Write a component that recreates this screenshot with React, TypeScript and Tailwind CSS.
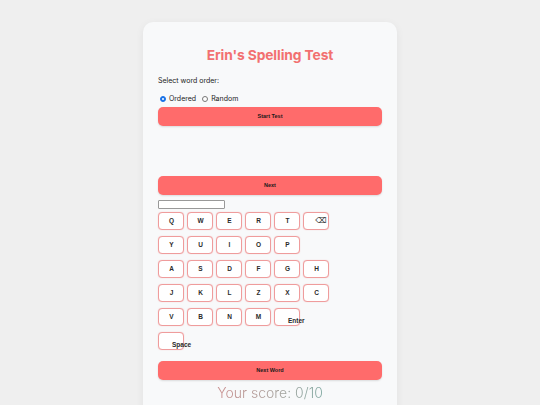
import React from 'react';

const rows: string[][] = [
  ['Q', 'W', 'E', 'R', 'T', '⌫'],
  ['Y', 'U', 'I', 'O', 'P'],
  ['A', 'S', 'D', 'F', 'G', 'H'],
  ['J', 'K', 'L', 'Z', 'X', 'C'],
  ['V', 'B', 'N', 'M', 'Enter'],
  ['Space'],
];

const Key: React.FC<{ label: string }> = ({ label }) => {
  const wide = label.length > 1 && label !== '⌫';
  if (wide) {
    return (
      <div className="w-[26px] h-[18px] shrink-0 rounded-[4px] border border-[#ef9c9c] bg-white shadow-[0_0_1px_rgba(240,120,120,0.5)] flex items-center pl-[13px] pt-[7px] whitespace-nowrap text-[6.5px] font-bold text-[#2a2a2a]">
        {label}
      </div>
    );
  }
  return (
    <div className="w-[26px] h-[18px] shrink-0 rounded-[4px] border border-[#ef9c9c] bg-white shadow-[0_0_1px_rgba(240,120,120,0.5)] flex items-center justify-center text-[6.5px] font-bold text-[#2a2a2a]">
      {label === '⌫' ? (
        <span className="pl-[10px] text-[8px] font-normal font-['DejaVu_Sans',sans-serif]">⌫</span>
      ) : (
        <span className="pl-[1px]">{label}</span>
      )}
    </div>
  );
};

const Button: React.FC<{ label: string }> = ({ label }) => (
  <div className="w-full h-[19px] rounded-[5px] bg-[#ff6b6b] shadow-[0_1px_2px_rgba(0,0,0,0.12)] flex items-center justify-center text-[5.5px] font-bold text-[#1a1a1a] font-['Liberation_Sans',sans-serif]">
    {label}
  </div>
);

export default function App() {
  return (
    <div className="min-h-[405px] h-[405px] overflow-hidden bg-[#efefef] pt-[22px] font-['Inter',sans-serif]">
      <div className="w-[254px] mx-auto bg-[#f8f9fa] rounded-t-[10px] shadow-[0_2px_8px_rgba(0,0,0,0.06)] px-[15px] pt-[24px] pb-[20px]">
        <h1 className="text-center text-[13.8px] font-bold text-[#f27070] leading-[18px] tracking-[-0.1px]">
          Erin's Spelling Test
        </h1>

        <div className="mt-[12px] text-[7px] text-[#222] leading-[9px]">Select word order:</div>

        <div className="mt-[9px] flex items-center gap-[3px] text-[7px] text-[#222] leading-[9px] pl-[2px]">
          <span className="w-[6px] h-[6px] rounded-full bg-[#1a73e8] border border-[#1a73e8] flex items-center justify-center">
            <span className="w-[2px] h-[2px] rounded-full bg-white" />
          </span>
          <span>Ordered</span>
          <span className="ml-[3px] w-[6px] h-[6px] rounded-full border border-[#777] bg-white" />
          <span>Random</span>
        </div>

        <div className="mt-[4px]">
          <Button label="Start Test" />
        </div>

        <div className="h-[50px]" />

        <Button label="Next" />

        <div className="mt-[5px] w-[67px] h-[9px] bg-white border border-[#999] rounded-[1px]" />

        <div className="mt-[3px] flex flex-col gap-[6px] font-['Liberation_Sans',sans-serif]">
          {rows.map((row, i) => (
            <div key={i} className="flex gap-[3px]">
              {row.map((k) => (
                <Key key={k} label={k} />
              ))}
            </div>
          ))}
        </div>

        <div className="mt-[11px]">
          <Button label="Next Word" />
        </div>

        <div className="mt-[2px] text-center text-[14px] font-light leading-[22px]">
          <span className="bg-gradient-to-r from-[#c98e8e] to-[#7fa8a1] bg-clip-text text-transparent">
            Your score: 0/10
          </span>
        </div>
      </div>
    </div>
  );
}
